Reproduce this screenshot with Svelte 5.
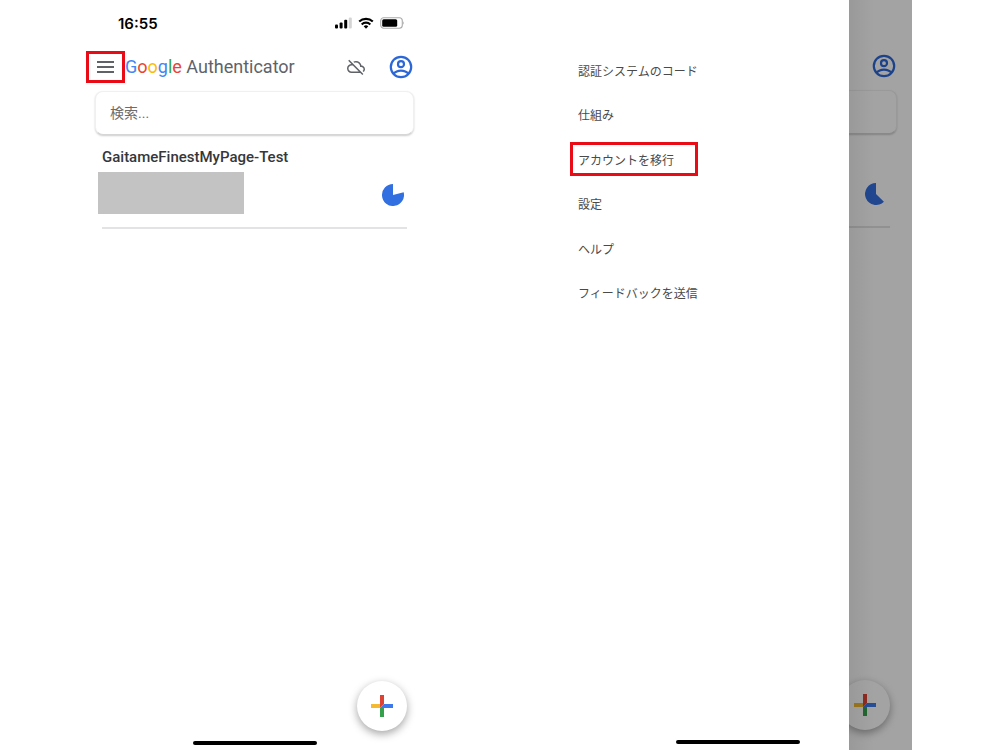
<script>
	const logo = [
		["G", "#4285f4"],
		["o", "#ea4335"],
		["o", "#fbbc05"],
		["g", "#4285f4"],
		["l", "#34a853"],
		["e", "#ea4335"],
	];

	const menu_items = [
		"認証システムのコード",
		"仕組み",
		"アカウントを移行",
		"設定",
		"ヘルプ",
		"フィードバックを送信",
	];
	const marked_item = "アカウントを移行";

	let search = $state("");

	// remaining time, the wedge from 12 o'clock to `angle` is cut out
	function pie_path(angle) {
		const rad = (angle * Math.PI) / 180;
		const x = 11 + 11 * Math.sin(rad);
		const y = 11 - 11 * Math.cos(rad);
		const large = angle < 180 ? 1 : 0;
		return `M11 11V0A11 11 0 ${large} 0 ${x} ${y}Z`;
	}
</script>

{#snippet avatar()}
	<button class="avatar" type="button" aria-label="アカウント">
		<svg width="24" height="24" viewBox="0 0 24 24" fill="none" stroke="#2c67d8" stroke-width="2.2">
			<circle cx="12" cy="12" r="10.2" />
			<circle cx="12" cy="9.2" r="3" />
			<path d="M4.6 18.800C6.400 16.600 9 15.600 12 15.600s5.600 1 7.400 3.200" />
		</svg>
	</button>
{/snippet}

{#snippet pie(angle)}
	<svg class="pie" width="22" height="22" viewBox="0 0 22 22" aria-hidden="true">
		<path d={pie_path(angle)} fill="#326fe0" />
	</svg>
{/snippet}

{#snippet fab()}
	<button class="fab" type="button" aria-label="追加">
		<svg width="22" height="22" viewBox="0 0 22 22">
			<path d="M0 9h9v4H0z" fill="#f4b92f" />
			<path d="M9 13h4v9H9z" fill="#34a04c" />
			<path d="M13 9h9v4H9z" fill="#3d78ec" />
			<path d="M9 0h4v9l-4 4z" fill="#dd4334" />
		</svg>
	</button>
{/snippet}

<div class="page">
	<main class="phone">
		<div class="status">
			<span class="time">16:55</span>
			<span class="indicators">
				<svg width="17" height="12" viewBox="0 0 17 12">
					<rect x="0" y="7.500" width="3" height="4" rx="1" />
					<rect x="4.600" y="5.400" width="3" height="6.100" rx="1" />
					<rect x="9.200" y="2.800" width="3" height="8.700" rx="1" />
					<rect x="13.800" y="0.500" width="3" height="11" rx="1" fill="#d4d4d4" />
				</svg>
				<svg width="16" height="12" viewBox="0 0 16 12">
					<g fill="none" stroke="#000" stroke-width="2.100">
						<path d="M1.200 4.600a9.800 9.800 0 0 1 13.600 0" />
						<path d="M3.700 7.400a6.200 6.200 0 0 1 8.600 0" />
					</g>
					<path d="M5.700 9.200a3.400 3.400 0 0 1 4.600 0L8 11.700z" />
				</svg>
				<svg width="25" height="12" viewBox="0 0 25 12">
					<rect x="0.700" y="0.700" width="21.600" height="10.600" rx="3" fill="none" stroke="#aaa" stroke-width="1.100" />
					<rect x="2.200" y="2.200" width="15" height="7.600" rx="1.500" />
					<path d="M23.200 4.200q1.600 1.800 0 3.600z" fill="#aaa" />
				</svg>
			</span>
		</div>

		<header>
			<button class="burger" type="button" aria-label="メニュー">
				<svg width="17" height="12" viewBox="0 0 17 12">
					<path d="M0 1h17M0 6h17M0 11h17" stroke="#5f6368" stroke-width="1.800" />
				</svg>
			</button>
			<h1>{#each logo as [letter, color]}<span style:color={color}>{letter}</span>{/each} Authenticator</h1>
			<svg class="cloud" width="18" height="18" viewBox="0 0 24 24" role="img" aria-label="同期オフ">
				<path d="M24 15c0-2.640-2.050-4.780-4.650-4.960C18.670 6.590 15.640 4 12 4c-1.330 0-2.570.36-3.650.97l1.490 1.490C10.510 6.170 11.230 6 12 6c3.040 0 5.500 2.460 5.500 5.500v.5H19c1.660 0 3 1.340 3 3 0 .99-.48 1.850-1.210 2.400l1.410 1.410c1.090-.92 1.800-2.270 1.800-3.810zM3 2.400L1.600 3.800l4.170 4.240h-.42C2.340 8.360 0 10.910 0 14c0 3.310 2.690 6 6 6h11.730l2.700 2.700 1.410-1.410L3 2.400zM6 18c-2.210 0-4-1.790-4-4s1.790-4 4-4h1.730l8 8H6z" fill="#5f6368" />
			</svg>
			{@render avatar()}
		</header>

		<input class="search" type="text" placeholder="検索..." aria-label="検索" bind:value={search} />

		<section class="account">
			<h2>GaitameFinestMyPage-Test</h2>
			<div class="code">
				<span class="mask"></span>
				{@render pie(76)}
			</div>
		</section>

		<div class="add">{@render fab()}</div>
		<div class="home"></div>
	</main>

	<div class="phone second">
		<nav>
			<ul>
				{#each menu_items as item}
					<li><button type="button" class:marked={item === marked_item}>{item}</button></li>
				{/each}
			</ul>
		</nav>
		<div class="behind">
			<div class="top">{@render avatar()}</div>
			<div class="search"></div>
			<div class="account">
				<div class="code">{@render pie(134)}</div>
			</div>
			<div class="add">{@render fab()}</div>
		</div>
		<div class="home"></div>
	</div>
</div>

<style>
:global(body) {
    margin: 0;
    background: #fff;
}
.page {
    display: flex;
    gap: 135px;
    min-height: 100vh;
    padding: 0 88px 0 81px;
    box-sizing: border-box;
    font-family: Roboto, "Noto Sans CJK JP", sans-serif;
}
.phone {
    position: relative;
    display: flex;
    flex-direction: column;
    flex: 1;
    min-width: 0;
}
button {
    background: none;
    border: 0;
    padding: 0;
    font: inherit;
    color: inherit;
    cursor: pointer;
}
svg {
    display: block;
    flex: none;
}
.status {
    display: flex;
    align-items: center;
    justify-content: space-between;
    height: 46px;
    padding: 0 24px 0 37px;
}
.time {
    font-family: Inter, sans-serif;
    font-size: 15px;
    font-weight: 600;
    color: #000;
}
.indicators {
    display: flex;
    align-items: center;
    gap: 6px;
}
header {
    display: flex;
    align-items: center;
    height: 42px;
    padding: 0 16px 0 5px;
}
.burger {
    display: flex;
    align-items: center;
    justify-content: center;
    width: 39px;
    height: 32px;
    box-sizing: border-box;
    border: 3px solid #e90c17;
}
h1 {
    flex: 1;
    margin: 0;
    font-size: 18px;
    line-height: 20px;
    font-weight: 400;
    color: #5f6368;
    white-space: nowrap;
}
.cloud {
    margin-right: 24px;
}
.search {
    display: block;
    height: 44px;
    margin: 3px 15px 0 14px;
    padding: 0 14px;
    box-sizing: border-box;
    border: 1px solid #f0f0f0;
    border-bottom-color: #d6d6d6;
    border-radius: 8px;
    box-shadow: 0 1px 2px rgba(0,0,0,.2);
    background: #fff;
    font-family: inherit;
    font-size: 14px;
    color: #333;
    outline: 0;
}
.search::placeholder {
    color: #6c6c6c;
    opacity: 1;
}
.account {
    margin: 0 22px 0 21px;
    padding-bottom: 13px;
    border-bottom: 2px solid #e3e3e5;
}
h2 {
    margin: 0;
    padding-top: 12px;
    font-size: 15px;
    line-height: 20px;
    font-weight: 500;
    color: #36373a;
}
.code {
    display: flex;
    align-items: center;
    justify-content: space-between;
    height: 42px;
    margin: 5px 3px 0 -4px;
}
.mask {
    width: 146px;
    height: 42px;
    background: #c3c3c3;
}
.pie {
    margin-top: 4px;
}
.add {
    display: flex;
    justify-content: flex-end;
    margin-top: auto;
    padding: 0 22px 19px 0;
}
.fab {
    display: flex;
    align-items: center;
    justify-content: center;
    flex: none;
    width: 50px;
    height: 50px;
    border-radius: 50%;
    background: #fff;
    box-shadow: 0 3px 8px rgba(0,0,0,.36);
}
.home {
    position: absolute;
    bottom: 5px;
    left: 50%;
    width: 124px;
    height: 4px;
    border-radius: 2px;
    background: #000;
    transform: translateX(-50%);
}

/* opened menu */
.second {
    flex-direction: row;
}
.second .home {
    bottom: 6px;
}
nav {
    flex: 1;
}
ul {
    display: grid;
    grid-auto-rows: 1fr;
    align-items: center;
    height: 267px;
    margin: 0;
    padding: 48px 0 0 6px;
    list-style: none;
}
nav button {
    display: block;
    height: 34px;
    padding: 0 21px 0 5px;
    border: 3px solid transparent;
    font-size: 12px;
    color: #4a4a4a;
    white-space: nowrap;
}
nav button.marked {
    border-color: #e90c17;
}
.behind {
    position: relative;
    display: flex;
    flex-direction: column;
    width: 63px;
    overflow: hidden;
    background: #fff;
}
.behind::after {
    content: '';
    position: absolute;
    inset: 0;
    background: linear-gradient(90deg, rgba(0,0,0,.4), rgba(0,0,0,.36) 40%);
    pointer-events: none;
}
.behind .top {
    display: flex;
    align-items: center;
    justify-content: flex-end;
    height: 42px;
    padding: 45px 16px 0 0;
}
.behind .search {
    margin-left: -20px;
}
.behind .account {
    margin-left: 0;
    padding-top: 37px;
}
.behind .code {
    justify-content: flex-end;
    margin-top: 0;
}
.behind .add {
    padding-bottom: 20px;
}
</style>
